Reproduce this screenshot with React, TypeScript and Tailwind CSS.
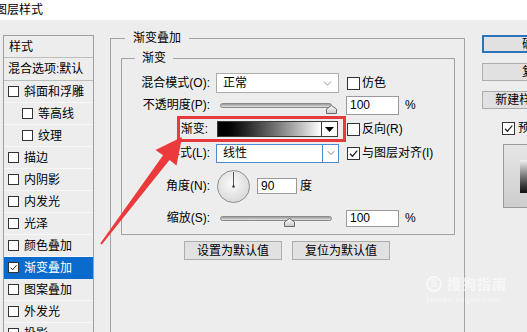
import { ChevronDown } from 'lucide-react'

const effects = [
  { name: '斜面和浮雕' },
  { name: '等高线', sub: true },
  { name: '纹理', sub: true },
  { name: '描边' },
  { name: '内阴影' },
  { name: '内发光' },
  { name: '光泽' },
  { name: '颜色叠加' },
  { name: '渐变叠加', on: true },
  { name: '图案叠加' },
  { name: '外发光' },
  { name: '投影' },
]

function Tick() {
  return (
    <svg viewBox="0 0 10 10" className="w-full h-full">
      <path d="M1.8 5.2 L4.1 7.5 L8.4 2.4" fill="none" stroke="#222" strokeWidth="1.1" />
    </svg>
  )
}

function Box({ on }: { on?: boolean }) {
  return (
    <span className="w-[13px] h-[13px] shrink-0 border border-[#333] bg-white flex">
      {on && <Tick />}
    </span>
  )
}

function SmallBox({ on }: { on?: boolean }) {
  return (
    <span className="w-[11px] h-[11px] shrink-0 border border-[#333] bg-white flex">
      {on && <Tick />}
    </span>
  )
}

function Slider({ at }: { at: number }) {
  return (
    <div className="relative ml-[4px] w-[112px] h-[5px] rounded-full border border-[#8a8a8a] bg-gradient-to-b from-[#9a9a9a] to-[#e2e2e2]">
      {/* thumb */}
      <svg
        className="absolute top-[1px] w-[11px] h-[9px]"
        style={{ left: at }}
        viewBox="0 0 11 9"
      >
        <defs>
          <linearGradient id="th" x1="0" y1="0" x2="0" y2="1">
            <stop offset="0" stopColor="#ffffff" />
            <stop offset="1" stopColor="#c8c8c8" />
          </linearGradient>
        </defs>
        <path d="M5.5 0.5 L10.5 4 L10.5 8.5 L0.5 8.5 L0.5 4 Z" fill="url(#th)" stroke="#6a6a6a" />
      </svg>
    </div>
  )
}

function Label({ children }: { children: React.ReactNode }) {
  return <div className="w-[88px] shrink-0 text-right">{children}</div>
}

export default function App() {
  return (
    <div className="relative w-[527px] h-[332px] overflow-hidden bg-[#ededed] text-black text-[12px] leading-[16px] font-['Liberation_Sans','Noto_Sans_CJK_SC',sans-serif]">
      {/* title bar */}
      <div className="h-[20px] bg-white flex items-center">
        <span className="-ml-[5px] text-[12px]">图层样式</span>
      </div>

      <div className="flex items-start">
        {/* 样式 list */}
        <div className="shrink-0 ml-[3px] mt-[15px] w-[91px] h-[320px] border-l border-r border-t border-[#a0a0a0]">
          <div className="h-[22px] flex items-center pl-[5px] border-b border-[#bdbdbd]">样式</div>
          <div className="h-[23px] flex items-center pl-[4px] border-b border-[#bdbdbd] whitespace-nowrap">混合选项:默认</div>
          {effects.map((e) => (
            <div
              key={e.name}
              className={
                'h-[22px] flex items-center gap-[5px] border-b ' +
                (e.on ? 'bg-[#0a6bcc] text-white border-[#0a6bcc] ' : 'border-[#f8f8f8] ') +
                (e.sub ? 'pl-[18px]' : 'pl-[4px]')
              }
            >
              <SmallBox on={e.on} />
              <span>{e.name}</span>
            </div>
          ))}
        </div>

        {/* 渐变叠加 group */}
        <fieldset className="shrink-0 ml-[16px] mt-[10px] w-[355px] h-[330px] border border-[#a3a3a3] pl-[10px] pr-[9px]">
          <legend className="ml-[4px] px-[8px] leading-[16px]">渐变叠加</legend>

          <fieldset className="mt-[4px] border border-[#a3a3a3] pb-[6px]">
            <legend className="ml-[13px] px-[7px] leading-[16px]">渐变</legend>
            <div className="pt-[6px] flex flex-col">
              {/* 混合模式 */}
              <div className="h-[22px] flex items-center">
                <Label>混合模式(O):</Label>
                <div className="ml-[6px] w-[130px] shrink-0">
                  <div className="w-[123px] h-[20px] bg-white border border-[#adadad] flex items-center pl-[6px] pr-[4px]">
                    <span className="flex-1">正常</span>
                    <ChevronDown size={13} strokeWidth={1.2} color="#555" />
                  </div>
                </div>
                <div className="ml-[1px] flex items-center gap-[2px]">
                  <Box />
                  <span>仿色</span>
                </div>
              </div>

              {/* 不透明度 */}
              <div className="h-[22px] flex items-center">
                <Label>不透明度(P):</Label>
                <div className="ml-[6px] w-[130px] shrink-0">
                  <Slider at={105} />
                </div>
                <div className="w-[53px] h-[19px] bg-white border border-[#9a9a9a] flex items-center pl-[3px]">100</div>
                <span className="ml-[6px]">%</span>
              </div>

              {/* 渐变 */}
              <div className="h-[26px] flex items-center">
                <Label>
                  <span className="pr-[2px]">渐变:</span>
                </Label>
                <div className="ml-[6px] w-[130px] shrink-0">
                  <div className="ml-[1px] w-[121px] h-[16px] border border-[#3a3a3a] flex">
                    <div className="w-[104px] h-full bg-gradient-to-r from-black to-white border-r border-[#3a3a3a]" />
                    <div className="flex-1 bg-white flex items-center justify-center">
                      <svg width="9" height="5" viewBox="0 0 9 5">
                        <path d="M0 0 L9 0 L4.5 5 Z" fill="#000" />
                      </svg>
                    </div>
                  </div>
                </div>
                <div className="ml-[1px] flex items-center gap-[2px]">
                  <Box />
                  <span>反向(R)</span>
                </div>
              </div>

              {/* 样式 */}
              <div className="h-[22px] flex items-center">
                <Label>样式(L):</Label>
                <div className="ml-[6px] w-[130px] shrink-0">
                  <div className="w-[123px] h-[19px] bg-white border border-[#4f8ad0] flex items-center">
                    <span className="flex-1 pl-[6px]">线性</span>
                    <div className="w-[16px] h-full border-l border-[#4f8ad0] flex items-center justify-center">
                      <ChevronDown size={12} strokeWidth={1.3} color="#444" />
                    </div>
                  </div>
                </div>
                <div className="ml-[1px] flex items-center gap-[2px]">
                  <Box on />
                  <span>与图层对齐(I)</span>
                </div>
              </div>

              {/* 角度 */}
              <div className="h-[44px] flex items-center">
                <Label>角度(N):</Label>
                <div className="ml-[7px] flex items-center">
                  <svg width="33" height="33" viewBox="0 0 33 33">
                    <defs>
                      <radialGradient id="dial" cx="0.45" cy="0.4" r="0.6">
                        <stop offset="0" stopColor="#fbfbfb" />
                        <stop offset="1" stopColor="#d9d9d9" />
                      </radialGradient>
                    </defs>
                    <circle cx="16.5" cy="16.5" r="16" fill="url(#dial)" stroke="#8e8e8e" />
                    <line x1="16.5" y1="16.5" x2="16.5" y2="2" stroke="#555" strokeWidth="1" />
                    <circle cx="16.5" cy="16.5" r="1.3" fill="#444" />
                  </svg>
                  <div className="ml-[7px] w-[40px] h-[16px] bg-white border border-[#9a9a9a] flex items-center pl-[3px]">90</div>
                  <span className="ml-[3px]">度</span>
                </div>
              </div>

              {/* 缩放 */}
              <div className="h-[20px] flex items-center">
                <Label>缩放(S):</Label>
                <div className="ml-[6px] w-[130px] shrink-0">
                  <Slider at={63} />
                </div>
                <div className="w-[53px] h-[17px] bg-white border border-[#9a9a9a] flex items-center pl-[3px]">100</div>
                <span className="ml-[6px]">%</span>
              </div>
            </div>
          </fieldset>

          <div className="mt-[6px] ml-[63px] flex gap-[10px]">
            <div className="w-[98px] h-[19px] bg-[#e1e1e1] border border-[#adadad] flex items-center justify-center">设置为默认值</div>
            <div className="w-[98px] h-[19px] bg-[#e1e1e1] border border-[#adadad] flex items-center justify-center">复位为默认值</div>
          </div>
        </fieldset>

        {/* buttons + preview */}
        <div className="shrink-0 ml-[17px] mt-[15px] w-[104px] flex flex-col">
          <div className="h-[18px] bg-[#e1e1e1] border-2 border-[#2c74b9] flex items-center justify-center">确定</div>
          <div className="mt-[10px] h-[18px] bg-[#e1e1e1] border border-[#adadad] flex items-center justify-center">复位</div>
          <div className="mt-[10px] h-[18px] bg-[#e1e1e1] border border-[#adadad] flex items-center justify-center">新建样式(W)...</div>
          <div className="mt-[11px] ml-[20px] flex items-center gap-[3px]">
            <Box on />
            <span>预览</span>
          </div>
          <div className="mt-[8px] ml-[21px] w-[83px] h-[64px] border border-[#9a9a9a] bg-gradient-to-b from-[#e6e6e6] to-[#cdcdcd] pt-[15px] pl-[16px]">
            <div className="w-[34px] h-[33px] bg-gradient-to-b from-[#f2f2f2] to-[#111]" />
          </div>
        </div>
      </div>

      {/* watermark */}
      <div className="absolute left-[426px] top-[276px] text-white/60 pointer-events-none">
        <div className="flex items-center gap-[5px]">
          <span className="w-[16px] h-[16px] rounded-full border-2 border-white/60 flex items-center justify-center text-[10px] font-bold leading-none">S</span>
          <span className="text-[14px] font-bold tracking-[1px]">搜狗指南</span>
        </div>
        <div className="mt-[4px] text-[8px] leading-[8px] tracking-[0.5px]">zhinan.sogou.com</div>
      </div>

      {/* red highlight box */}
      <div className="absolute left-[177px] top-[116px] w-[169px] h-[26px] border-[3px] border-[#e63a3d] pointer-events-none" />

      {/* red arrow */}
      <svg className="absolute left-0 top-0 w-[527px] h-[332px] pointer-events-none" viewBox="0 0 527 332">
        <polygon
          points="182,137 176.5,165.5 169.5,160.1 101.8,244.6 100.2,243.4 163.1,155.3 155.5,150"
          fill="#ec3a3c"
        />
      </svg>
    </div>
  )
}
